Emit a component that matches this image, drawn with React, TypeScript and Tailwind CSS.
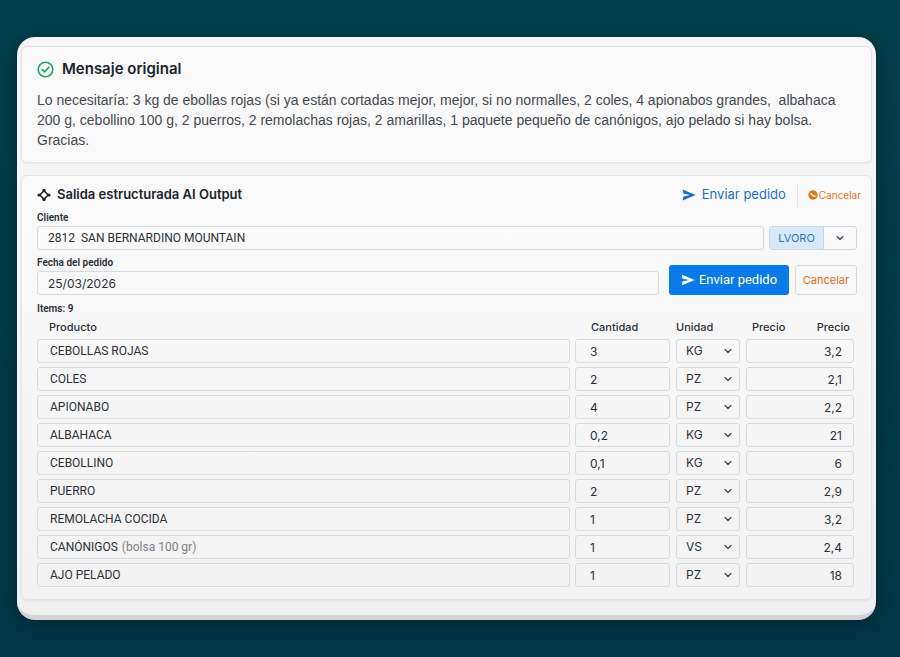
import { useState } from "react";
import { ChevronDown } from "lucide-react";
import { clsx } from "clsx";

type Item = {
  product: string;
  note?: string;
  quantity: string;
  unit: string;
  price: string;
};

const ITEMS: Item[] = [
  { product: "CEBOLLAS ROJAS", quantity: "3", unit: "KG", price: "3,2" },
  { product: "COLES", quantity: "2", unit: "PZ", price: "2,1" },
  { product: "APIONABO", quantity: "4", unit: "PZ", price: "2,2" },
  { product: "ALBAHACA", quantity: "0,2", unit: "KG", price: "21" },
  { product: "CEBOLLINO", quantity: "0,1", unit: "KG", price: "6" },
  { product: "PUERRO", quantity: "2", unit: "PZ", price: "2,9" },
  { product: "REMOLACHA COCIDA", quantity: "1", unit: "PZ", price: "3,2" },
  { product: "CANÓNIGOS", note: "(bolsa 100 gr)", quantity: "1", unit: "VS", price: "2,4" },
  { product: "AJO PELADO", quantity: "1", unit: "PZ", price: "18" },
];

const UNITS = ["KG", "PZ", "VS"];

const MESSAGE =
  "Lo necesitaría: 3 kg de ebollas rojas (si ya están cortadas mejor, mejor, si no normalles, 2 coles, 4 apionabos grandes,  albahaca 200 g, cebollino 100 g, 2 puerros, 2 remolachas rojas, 2 amarillas, 1 paquete pequeño de canónigos, ajo pelado si hay bolsa. Gracias.";

const field = "h-6 rounded-[3px] border border-[#d9dadc] bg-transparent text-xs text-[#2c3138] outline-none";
const panel = "rounded-md border border-[#e3e3e5] shadow-[0_1px_2px_rgba(0,0,0,0.05)]";
const fieldLabel = "block font-['Roboto',sans-serif] text-[10px] font-semibold leading-4";

function CheckIcon() {
  return (
    <svg viewBox="0 0 17 17" className="size-[17px] shrink-0" fill="none" stroke="#23a566" aria-hidden="true">
      <circle cx="8.5" cy="8.5" r="7.3" strokeWidth="1.6" />
      <path d="M5.2 8.7 7.5 10.9 11.8 6.3" strokeWidth="1.7" strokeLinecap="round" strokeLinejoin="round" />
    </svg>
  );
}

function SendIcon() {
  return (
    <svg viewBox="0 0 14 12" className="h-3 w-3.5 shrink-0" fill="currentColor" aria-hidden="true">
      <path d="M0.6 0.4 13.6 6 0.6 11.6 1.4 7.5 8 6 1.4 4.5Z" />
    </svg>
  );
}

function NodesIcon() {
  return (
    <svg viewBox="0 0 14 14" className="size-3.5 shrink-0" fill="none" stroke="currentColor" aria-hidden="true">
      <path d="M7 2.8 11.2 7 7 11.2 2.8 7Z" strokeWidth="1.6" strokeLinejoin="round" />
      <g fill="currentColor" stroke="none">
        <circle cx="7" cy="2.5" r="1.7" />
        <circle cx="12" cy="7" r="1.6" />
        <circle cx="7" cy="11.5" r="1.7" />
        <circle cx="2" cy="7" r="1.6" />
      </g>
    </svg>
  );
}

function CancelIcon() {
  return (
    <svg viewBox="0 0 10 10" className="size-[10px] shrink-0" aria-hidden="true">
      <circle cx="5" cy="5" r="4.7" fill="#d9781f" />
      <path d="M2.9 3.5 4.6 5.4 7.2 6.3" fill="none" stroke="#fff" strokeWidth="1.3" strokeLinecap="round" />
    </svg>
  );
}

function ItemRow({ item }: { item: Item }) {
  return (
    <tr>
      <td className="pb-1 pr-[5px]">
        <label className={clsx(field, "flex items-center gap-1 px-3 font-['Roboto',sans-serif]")}>
          <input
            aria-label="Producto"
            defaultValue={item.product}
            className={clsx("h-full min-w-0 bg-transparent outline-none", item.note ? "field-sizing-content" : "w-full")}
          />
          {item.note ? <span className="text-[#7b7f86]">{item.note}</span> : null}
        </label>
      </td>
      <td className="pb-1 pr-1.5">
        <input aria-label="Cantidad" defaultValue={item.quantity} className={clsx(field, "block w-full px-3.5")} />
      </td>
      <td className="pb-1 pr-1.5">
        <div className="relative">
          <select
            aria-label="Unidad"
            defaultValue={item.unit}
            className={clsx(field, "block w-full appearance-none px-[9px]")}
          >
            {UNITS.map((unit) => (
              <option key={unit}>{unit}</option>
            ))}
          </select>
          <ChevronDown
            className="pointer-events-none absolute right-1.5 top-1.5 size-3 text-[#3a4a5a]"
            strokeWidth={2.5}
          />
        </div>
      </td>
      <td colSpan={2} className="pb-1">
        <input
          aria-label="Precio"
          defaultValue={item.price}
          className={clsx(field, "block w-full px-[11px] text-right")}
        />
      </td>
    </tr>
  );
}

export default function App() {
  const [client, setClient] = useState("2812  SAN BERNARDINO MOUNTAIN");
  const [date, setDate] = useState("25/03/2026");

  return (
    <div className="min-h-screen bg-linear-to-b from-[#033f4b] to-[#023645] pb-9 pl-[17px] pr-6 pt-[37px] font-['Inter','Liberation_Sans',sans-serif] text-[#2c3138]">
      <main className="rounded-[18px] border-b-[5px] border-[#d3d3d3] bg-linear-to-b from-[#f6f6f6] to-[#eeeff0] px-1 pb-[15px] pt-[9px] shadow-[0_4px_16px_rgba(0,20,30,0.45)]">
        <section className={clsx(panel, "bg-[#f9f9f9] px-[15px] pb-3 pt-3")}>
          <h1 className="flex items-center gap-2 text-[15px] font-semibold leading-5 text-[#20242b]">
            <CheckIcon />
            Mensaje original
          </h1>
          <p className="mt-[11px] whitespace-pre-wrap font-['Liberation_Sans',sans-serif] text-sm leading-5 text-[#454950]">
            {MESSAGE}
          </p>
        </section>

        <section className={clsx(panel, "mt-3 bg-linear-to-b from-[#fafafa] to-[#f2f2f2] pb-2 pl-[15px] pr-2.5 pt-[7px]")}>
          <header className="flex h-6 items-center">
            <h2 className="flex flex-1 items-center gap-1.5 text-[13px] font-semibold text-[#20242b]">
              <NodesIcon />
              Salida estructurada AI Output
            </h2>
            <button type="button" className="flex items-center gap-1.5 text-[13px] text-[#1a6fc9]">
              <SendIcon />
              Enviar pedido
            </button>
            <div className="ml-[11px] mr-2.5 h-6 w-px bg-[#e4e4e6]" />
            <button type="button" className="flex items-center gap-px text-[10px] text-[#d9781f]">
              <CancelIcon />
              Cancelar
            </button>
          </header>

          <div className="pr-1">
            <label htmlFor="cliente" className={clsx(fieldLabel, "mt-[3px]")}>
              Cliente
            </label>
            <div className="flex gap-[5px]">
              <input
                id="cliente"
                value={client}
                onChange={(e) => setClient(e.target.value)}
                className={clsx(field, "min-w-0 flex-1 px-2.5 font-['Roboto',sans-serif]")}
              />
              <div className="flex h-6 overflow-hidden rounded-[3px] border border-[#d0d9e2] text-[11px]">
                <button type="button" className="w-[54px] border-r border-[#c3d7ea] bg-[#d8eafa] text-[#2b78bd]">
                  LVORO
                </button>
                <button type="button" aria-label="Más opciones" className="flex w-8 items-center justify-center">
                  <ChevronDown className="size-3 text-[#3a4a5a]" strokeWidth={2.5} />
                </button>
              </div>
            </div>

            <div className="mt-[5px] flex items-end gap-1.5">
              <div className="mr-1 min-w-0 flex-1">
                <label htmlFor="fecha" className={fieldLabel}>
                  Fecha del pedido
                </label>
                <input
                  id="fecha"
                  value={date}
                  onChange={(e) => setDate(e.target.value)}
                  className={clsx(field, "block w-full px-2.5")}
                />
              </div>
              <button
                type="button"
                className="flex h-[30px] w-[120px] items-center justify-center gap-1 rounded-[3px] bg-[#0a7be6] font-['Roboto',sans-serif] text-[13px] text-white"
              >
                <SendIcon />
                Enviar pedido
              </button>
              <button
                type="button"
                className="h-[30px] w-[62px] rounded-[3px] border border-[#d9dadc] text-[11px] text-[#d9701a]"
              >
                Cancelar
              </button>
            </div>
          </div>

          <p className={clsx(fieldLabel, "mt-1.5")}>Items: 9</p>

          <div className="pr-[7px]">
            <table className="w-full table-fixed border-separate border-spacing-0">
              <colgroup>
                <col />
                <col className="w-[101px]" />
                <col className="w-[70px]" />
                <col className="w-[54px]" />
                <col className="w-[54px]" />
              </colgroup>
              <thead>
                <tr className="h-[22px] text-[11px] leading-4">
                  <th className="px-3 pb-[3px] text-left font-medium">Producto</th>
                  <th className="px-4 pb-[3px] text-left font-medium">Cantidad</th>
                  <th className="pb-[3px] text-left font-medium">Unidad</th>
                  <th className="pb-[3px] pl-1.5 text-left font-medium">Precio</th>
                  <th className="pb-[3px] pr-1 text-right font-medium">Precio</th>
                </tr>
              </thead>
              <tbody>
                {ITEMS.map((item) => (
                  <ItemRow key={item.product} item={item} />
                ))}
              </tbody>
            </table>
          </div>
        </section>
      </main>
    </div>
  );
}
